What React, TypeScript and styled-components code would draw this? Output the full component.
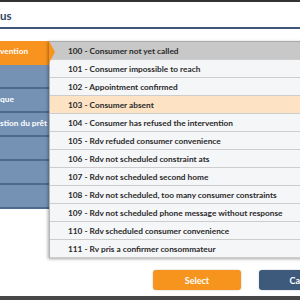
import React from "react";
import styled, { createGlobalStyle } from "styled-components";

const Global = createGlobalStyle`
  html, body { margin: 0; padding: 0; width: 300px; height: 300px; overflow: hidden; background: #ffffff; }
  body { font-family: Lato, "Noto Sans", "DejaVu Sans", sans-serif; }
`;

const Dialog = styled.div`
  box-sizing: border-box;
  width: 366px;
  height: 300px;
  display: flex;
  flex-direction: column;
  border-top: 2px solid #333333;
  border-bottom: 4px solid #474747;
  background: #ffffff;
`;

const Header = styled.div`
  box-sizing: border-box;
  height: 27px;
  display: flex;
  align-items: center;
  border-bottom: 2px solid #3e5677;
`;

const Title = styled.h1`
  margin: 0;
  font-size: 11.5px;
  font-weight: 700;
  color: #2c4566;
  line-height: 1;
  padding-top: 2px;
`;

const Body = styled.div`
  flex: 1;
  display: flex;
  align-items: flex-start;
  padding-top: 12px;
  min-height: 0;
`;

const Nav = styled.nav`
  width: 49px;
  display: flex;
  flex-direction: column;
  flex-shrink: 0;
`;

const NavItem = styled.div<{ $active?: boolean }>`
  position: relative;
  box-sizing: border-box;
  height: 24px;
  display: flex;
  align-items: center;
  padding-bottom: 2px;
  background: ${(p) => (p.$active ? "#f7931e" : "#7592b5")};
  border-bottom: 2px solid ${(p) => (p.$active ? "#f7931e" : "#4d6b8f")};
  color: #ffffff;
  font-size: 8.3px;
  font-weight: 700;
  white-space: nowrap;
  ${(p) =>
    p.$active &&
    `
    &::after {
      content: "";
      position: absolute;
      right: -6px;
      top: 0;
      width: 0;
      height: 0;
      border-top: 11px solid transparent;
      border-bottom: 11px solid transparent;
      border-left: 6px solid #f7931e;
      z-index: 3;
    }
  `}
`;

const List = styled.ul`
  list-style: none;
  margin: 0;
  padding: 0;
  width: 298px;
  position: relative;
  z-index: 2;
  border-top: 1px solid #a9a9a9;
  border-left: 1px solid #b5b5b5;
  box-shadow: -1px 1px 3px rgba(0, 0, 0, 0.35);
  background: #f5f6f8;
`;

const Row = styled.li<{ $state?: "hover" | "selected" }>`
  box-sizing: border-box;
  height: 18px;
  display: flex;
  align-items: center;
  padding-left: 18px;
  border-bottom: 1px solid #cdcdcd;
  background: ${(p) =>
    p.$state === "hover" ? "#c8c8c8" : p.$state === "selected" ? "#fde2c4" : "#f5f6f8"};
  color: #2a2a2a;
  font-size: 8.3px;
  font-weight: 700;
  white-space: nowrap;
`;

const Footer = styled.div`
  box-sizing: border-box;
  height: 40px;
  display: flex;
  justify-content: flex-end;
  align-items: flex-end;
  gap: 18px;
  padding: 0 19px 6px 0;
`;

const Button = styled.button<{ $variant: "primary" | "secondary" }>`
  width: 88px;
  height: 20px;
  border: none;
  border-radius: 3px;
  background: ${(p) => (p.$variant === "primary" ? "#f7941d" : "#3d5a7d")};
  color: #ffffff;
  font-family: inherit;
  font-size: 9px;
  font-weight: 700;
  box-shadow: 0 0 2px rgba(0, 0, 0, 0.25);
  cursor: pointer;
`;

const navItems = ["vention", "", "que", "stion du prêt", "", "", ""];

const rows = [
  "100 - Consumer not yet called",
  "101 - Consumer impossible to reach",
  "102 - Appointment confirmed",
  "103 - Consumer absent",
  "104 - Consumer has refused the intervention",
  "105 - Rdv refuded consumer convenience",
  "106 - Rdv not scheduled constraint ats",
  "107 - Rdv not scheduled second home",
  "108 - Rdv not scheduled, too many consumer constraints",
  "109 - Rdv not scheduled phone message without response",
  "110 - Rdv scheduled consumer convenience",
  "111 - Rv pris a confirmer consommateur",
];

export default function App() {
  return (
    <>
      <Global />
      <Dialog>
        <Header>
          <Title>us</Title>
        </Header>
        <Body>
          <Nav>
            {navItems.map((t, i) => (
              <NavItem key={i} $active={i === 0}>
                {t}
              </NavItem>
            ))}
          </Nav>
          <List>
            {rows.map((r, i) => (
              <Row key={r} $state={i === 0 ? "hover" : i === 3 ? "selected" : undefined}>
                {r}
              </Row>
            ))}
          </List>
        </Body>
        <Footer>
          <Button $variant="primary">Select</Button>
          <Button $variant="secondary">Cancel</Button>
        </Footer>
      </Dialog>
    </>
  );
}
